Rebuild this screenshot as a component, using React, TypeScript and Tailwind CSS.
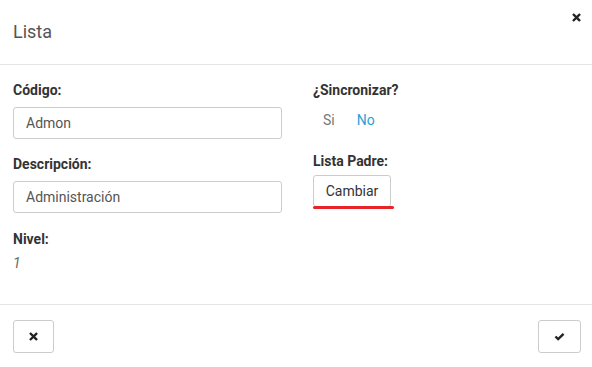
const TimesIcon = ({ className }: { className?: string }) => (
  <svg viewBox="0 0 10 10" className={className} fill="none" stroke="currentColor" strokeWidth={2.6} strokeLinecap="square">
    <path d="M2 2 L8 8 M8 2 L2 8" />
  </svg>
);

const CheckIcon = ({ className }: { className?: string }) => (
  <svg viewBox="0 0 12 10" className={className} fill="none" stroke="currentColor" strokeWidth={2.6} strokeLinejoin="miter">
    <path d="M1.5 5 L4.5 8 L10.5 2" />
  </svg>
);

export default function App() {
  return (
    <div className="h-[367px] w-[592px] bg-white font-['Roboto',sans-serif] text-[#333]">
      <div className="relative flex h-[65px] items-center border-b border-[#e5e5e5] px-[13px]">
        <h4 className="text-[18px] font-normal leading-[20px] text-[#555]">Lista</h4>
        <button className="absolute right-[11px] top-[13px] text-[#222]">
          <TimesIcon className="h-[9px] w-[9px]" />
        </button>
      </div>

      <div className="flex h-[239px] px-[13px] pt-[15px]">
        <div className="w-[269px]">
          <label className="block text-[14px] font-bold leading-[20px]">Código:</label>
          <input
            readOnly
            value="Admon"
            className="mt-[7px] h-[32px] w-full rounded-[3px] border border-[#ccc] px-[12px] text-[14px] text-[#555] outline-none"
          />
          <label className="mt-[15px] block text-[14px] font-bold leading-[20px]">Descripción:</label>
          <input
            readOnly
            value="Administración"
            className="mt-[7px] h-[32px] w-full rounded-[3px] border border-[#ccc] px-[12px] text-[14px] text-[#555] outline-none"
          />
          <label className="mt-[16px] block text-[14px] font-bold leading-[20px]">Nivel:</label>
          <p className="mt-[4px] text-[14px] italic leading-[20px] text-[#666]">1</p>
        </div>

        <div className="ml-[31px]">
          <label className="block text-[14px] font-bold leading-[20px]">¿Sincronizar?</label>
          <div className="mt-[10px] flex gap-[22px] pl-[10px] text-[14px] leading-[20px]">
            <span className="text-[#777]">Si</span>
            <span className="text-[#2a9fd6]">No</span>
          </div>
          <label className="mt-[21px] block text-[14px] font-bold leading-[20px]">Lista Padre:</label>
          <div className="mt-[4px] inline-flex flex-col">
            <button className="h-[32px] w-[78px] rounded-[3px] border border-[#ccc] text-[14px] text-[#333]">
              Cambiar
            </button>
            <div className="mt-[-1px] h-[3px] w-[81px] rounded-full bg-[#e8232a]" />
          </div>
        </div>
      </div>

      <div className="flex items-center justify-between border-t border-[#e5e5e5] px-[13px] pt-[15px]">
        <button className="flex h-[33px] w-[41px] items-center justify-center rounded-[3px] border border-[#ccc] text-[#222]">
          <TimesIcon className="h-[9px] w-[9px]" />
        </button>
        <button className="mr-[-2px] flex h-[33px] w-[43px] items-center justify-center rounded-[3px] border border-[#ccc] text-[#222]">
          <CheckIcon className="h-[9px] w-[11px]" />
        </button>
      </div>
    </div>
  );
}
